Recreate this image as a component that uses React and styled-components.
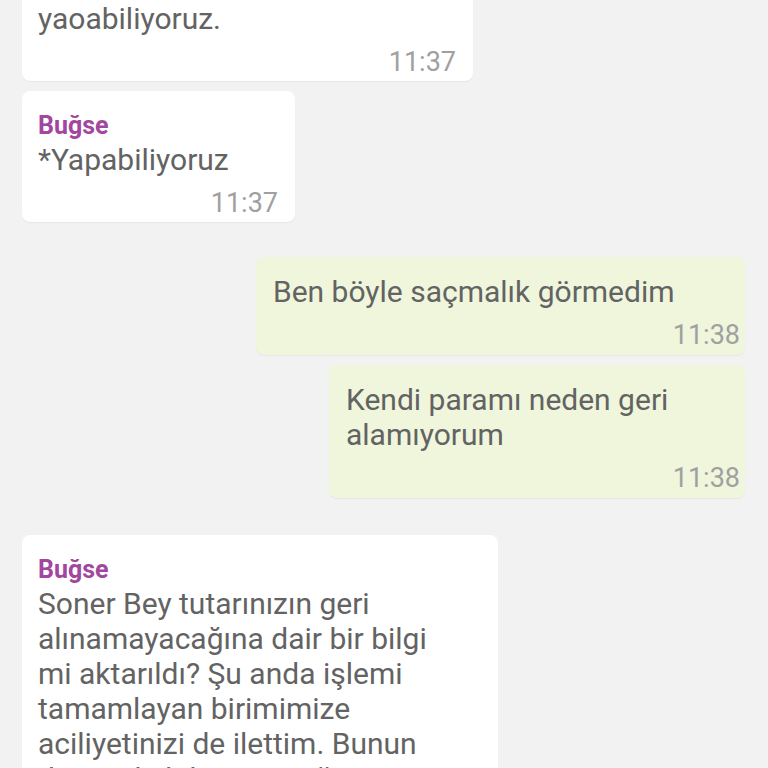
import React from "react";
import styled, { createGlobalStyle } from "styled-components";

const GlobalStyle = createGlobalStyle`
  html, body {
    margin: 0;
    padding: 0;
    background: #f2f2f2;
    overflow: hidden;
  }
  body {
    font-family: Roboto, "Liberation Sans", sans-serif;
  }
`;

const messages = [
  {
    id: 1,
    out: false,
    width: 451,
    text: "yeni bir yöntemle işlemi\nyaoabiliyoruz.",
    time: "11:37",
  },
  {
    id: 2,
    out: false,
    width: 273,
    name: "Buğse",
    text: "*Yapabiliyoruz",
    time: "11:37",
    gap: 10,
  },
  {
    id: 3,
    out: true,
    width: 489,
    text: "Ben böyle saçmalık görmedim",
    time: "11:38",
    gap: 35,
  },
  {
    id: 4,
    out: true,
    width: 416,
    text: "Kendi paramı neden geri\nalamıyorum",
    time: "11:38",
    gap: 10,
  },
  {
    id: 5,
    out: false,
    width: 476,
    name: "Buğse",
    text:
      "Soner Bey tutarınızın geri\nalınamayacağına dair bir bilgi\nmi aktarıldı? Şu anda işlemi\ntamamlayan birimimize\naciliyetinizi de ilettim. Bunun\ndurumda bilgi vereceğim",
    time: "11:39",
    gap: 37,
  },
];

export default function App() {
  return (
    <>
      <GlobalStyle />
      <Chat>
        {messages.map((m) => (
          <Bubble key={m.id} $out={m.out} $w={m.width} $gap={m.gap || 0}>
            {m.name && <Sender>{m.name}</Sender>}
            <Text>{m.text}</Text>
            <Time>{m.time}</Time>
          </Bubble>
        ))}
      </Chat>
    </>
  );
}

const Chat = styled.div`
  display: flex;
  flex-direction: column;
  padding: 0 23px 0 22px;
  margin-top: -53px;
  height: 900px;
`;

const Bubble = styled.div`
  box-sizing: border-box;
  width: ${(p) => p.$w}px;
  align-self: ${(p) => (p.$out ? "flex-end" : "flex-start")};
  margin-top: ${(p) => p.$gap}px;
  background: ${(p) => (p.$out ? "#eff6dc" : "#ffffff")};
  border-radius: 8px;
  box-shadow: 0 1px 1px rgba(0, 0, 0, 0.05);
  padding: ${(p) => (p.$out ? "17px 5px 4px 17px" : "19px 17px 3px 16px")};
  display: flex;
  flex-direction: column;
`;

const Sender = styled.div`
  color: #a2479e;
  font-weight: 700;
  font-size: 25px;
  line-height: 32px;
`;

const Text = styled.div`
  color: #636363;
  font-size: 30px;
  line-height: 35px;
  white-space: pre-line;
`;

const Time = styled.div`
  align-self: flex-end;
  margin-top: 10px;
  color: #a0a0a0;
  font-size: 27px;
  line-height: 32px;
`;
